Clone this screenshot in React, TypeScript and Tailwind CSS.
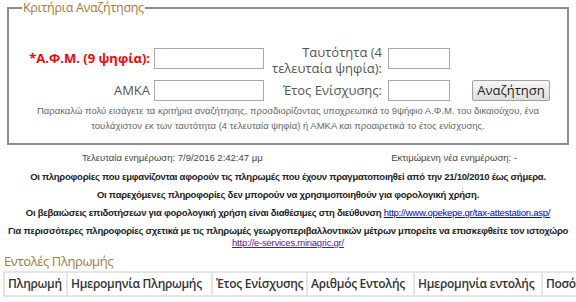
const label = "font-['Open_Sans',sans-serif]"
const small = "font-['Liberation_Sans',sans-serif]"

const columns = [
  { title: 'Πληρωμή', w: 'w-[63px]' },
  { title: 'Ημερομηνία Πληρωμής', w: 'w-[145px]' },
  { title: 'Έτος Ενίσχυσης', w: 'w-[95px]' },
  { title: 'Αριθμός Εντολής', w: 'w-[107px]' },
  { title: 'Ημερομηνία εντολής', w: 'w-[128px]' },
  { title: 'Ποσό Πληρωμής', w: 'w-[100px]' },
]

function Field({ w }: { w: string }) {
  return <input type="text" className={`${w} h-[21px] border border-[#a9a9a9] bg-white`} />
}

export default function App() {
  return (
    <div className="w-[576px] h-[302px] overflow-hidden bg-white text-[#333]">
      <fieldset className="mx-[7px] border-2 border-[#8c8c8c] px-0 pb-[10px] pt-[28px]">
        <legend className={`${label} ml-[13px] px-[1px] text-[12.5px] leading-[16px] tracking-[-0.3px] text-[#a0783c]`}>Κριτήρια Αναζήτησης</legend>

        <div className="flex items-start">
          <div className={`${label} mt-[4px] h-[21px] w-[141px] text-right text-[13px] font-bold leading-[21px] text-[#ff0000]`}>*Α.Φ.Μ. (9 ψηφία):</div>
          <div className="ml-[4px] mt-[4px] flex"><Field w="w-[110px]" /></div>
          <div className={`${label} w-[118px] text-right text-[13px] leading-[16px] text-[#555]`}>Ταυτότητα (4<br />τελευταία ψηφία):</div>
          <div className="ml-[6px] mt-[4px] flex"><Field w="w-[62px]" /></div>
        </div>

        <div className="mt-[4px] flex items-center">
          <div className={`${label} w-[141px] text-right text-[13px] text-[#555]`}>ΑΜΚΑ</div>
          <div className="ml-[4px] flex"><Field w="w-[110px]" /></div>
          <div className={`${label} w-[118px] text-right text-[13px] text-[#555]`}>Έτος Ενίσχυσης:</div>
          <div className="ml-[6px] flex"><Field w="w-[62px]" /></div>
          <button className={`${label} ml-[22px] h-[21px] w-[78px] rounded-[2px] border border-[#a0a0a0] bg-gradient-to-b from-[#f6f6f6] to-[#dedede] text-[13px] leading-[19px] text-[#222]`}>Αναζήτηση</button>
        </div>

        <p className={`${small} mt-[2px] text-center text-[9.5px] leading-[15px] text-[#666]`}>
          Παρακαλώ πολύ εισάγετε τα κριτήρια αναζήτησης, προσδιορίζοντας υποχρεωτικά το 9ψήφιο Α.Φ.Μ. του δικαιούχου, ένα<br />
          τουλάχιστον εκ των ταυτότητα (4 τελευταία ψηφία) ή ΑΜΚΑ και προαιρετικά το έτος ενίσχυσης.
        </p>
      </fieldset>

      <div className={`${small} mt-[7px] flex text-[9.5px] leading-[12px] text-[#444]`}>
        <div className="ml-[82px]">Τελευταία ενημέρωση: 7/9/2016 2:42:47 μμ</div>
        <div className="ml-auto mr-[59px]">Εκτιμώμενη νέα ενημέρωση: -</div>
      </div>

      <div className={`${small} mt-[7px] flex flex-col items-center gap-[6px] text-center text-[9.5px] font-bold leading-[12px] tracking-[-0.25px] text-[#222]`}>
        <p>Οι πληροφορίες που εμφανίζονται αφορούν τις πληρωμές που έχουν πραγματοποιηθεί από την 21/10/2010 έως σήμερα.</p>
        <p>Οι παρεχόμενες πληροφορίες δεν μπορούν να χρησιμοποιηθούν για φορολογική χρήση.</p>
        <p className="whitespace-nowrap">
          Οι βεβαιώσεις επιδοτήσεων για φορολογική χρήση είναι διαθέσιμες στη διεύθυνση{' '}
          <a href="#" className="font-normal text-[#0000ee] underline">http://www.opekepe.gr/tax-attestation.asp/</a>
        </p>
        <p>
          Για περισσότερες πληροφορίες σχετικά με τις πληρωμές γεωργοπεριβαλλοντικών μέτρων μπορείτε να επισκεφθείτε τον ιστοχώρο<br />
          <a href="#" className="font-normal text-[#551a8b] underline">http://e-services.minagric.gr/</a>
        </p>
      </div>

      <h2 className={`${label} mt-[3px] ml-[4px] text-[13px] leading-[18px] tracking-[-0.4px] text-[#a0783c]`}>Εντολές Πληρωμής</h2>

      <table className={`${label} ml-[3px] mt-[1px] w-[640px] table-fixed border-collapse text-[12px] leading-[18px] tracking-[-0.3px] text-[#333] whitespace-nowrap`}>
        <thead>
          <tr>
            {columns.map((c) => (
              <th key={c.title} className={`${c.w} overflow-hidden border-2 border-[#e4e4e4] px-[3px] py-[2px] text-left font-semibold`}>{c.title}</th>
            ))}
          </tr>
        </thead>
      </table>
    </div>
  )
}
